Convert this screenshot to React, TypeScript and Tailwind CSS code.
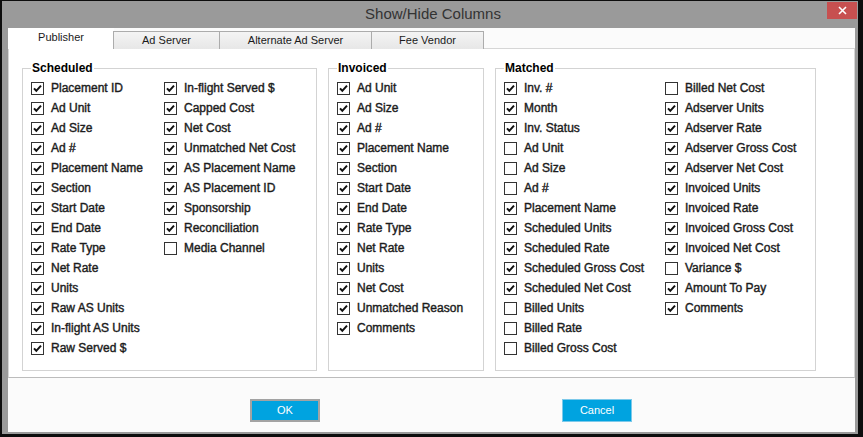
import React from "react";

type Item = { label: string; on: boolean };

const scheduledA: Item[] = [
  { label: "Placement ID", on: true },
  { label: "Ad Unit", on: true },
  { label: "Ad Size", on: true },
  { label: "Ad #", on: true },
  { label: "Placement Name", on: true },
  { label: "Section", on: true },
  { label: "Start Date", on: true },
  { label: "End Date", on: true },
  { label: "Rate Type", on: true },
  { label: "Net Rate", on: true },
  { label: "Units", on: true },
  { label: "Raw AS Units", on: true },
  { label: "In-flight AS Units", on: true },
  { label: "Raw Served $", on: true },
];

const scheduledB: Item[] = [
  { label: "In-flight Served $", on: true },
  { label: "Capped Cost", on: true },
  { label: "Net Cost", on: true },
  { label: "Unmatched Net Cost", on: true },
  { label: "AS Placement Name", on: true },
  { label: "AS Placement ID", on: true },
  { label: "Sponsorship", on: true },
  { label: "Reconciliation", on: true },
  { label: "Media Channel", on: false },
];

const invoiced: Item[] = [
  "Ad Unit",
  "Ad Size",
  "Ad #",
  "Placement Name",
  "Section",
  "Start Date",
  "End Date",
  "Rate Type",
  "Net Rate",
  "Units",
  "Net Cost",
  "Unmatched Reason",
  "Comments",
].map((label) => ({ label, on: true }));

const matchedA: Item[] = [
  { label: "Inv. #", on: true },
  { label: "Month", on: true },
  { label: "Inv. Status", on: true },
  { label: "Ad Unit", on: false },
  { label: "Ad Size", on: false },
  { label: "Ad #", on: false },
  { label: "Placement Name", on: true },
  { label: "Scheduled Units", on: true },
  { label: "Scheduled Rate", on: true },
  { label: "Scheduled Gross Cost", on: true },
  { label: "Scheduled Net Cost", on: true },
  { label: "Billed Units", on: false },
  { label: "Billed Rate", on: false },
  { label: "Billed Gross Cost", on: false },
];

const matchedB: Item[] = [
  { label: "Billed Net Cost", on: false },
  { label: "Adserver Units", on: true },
  { label: "Adserver Rate", on: true },
  { label: "Adserver Gross Cost", on: true },
  { label: "Adserver Net Cost", on: true },
  { label: "Invoiced Units", on: true },
  { label: "Invoiced Rate", on: true },
  { label: "Invoiced Gross Cost", on: true },
  { label: "Invoiced Net Cost", on: true },
  { label: "Variance $", on: false },
  { label: "Amount To Pay", on: true },
  { label: "Comments", on: true },
];

function Check({ item }: { item: Item }) {
  return (
    <div className="flex h-[20px] items-center whitespace-nowrap">
      {/* box */}
      <span className="mr-[7px] flex h-[13px] w-[13px] shrink-0 items-center justify-center border border-[#333] bg-white">
        {item.on && (
          <svg width="11" height="11" viewBox="0 0 11 11">
            <path d="M2 5.4 L4.3 7.8 L9 2.6" fill="none" stroke="#111" strokeWidth="2" />
          </svg>
        )}
      </span>
      <span className="text-[12px] leading-none text-[#1c1c1c] [-webkit-text-stroke:0.4px_#1c1c1c]">
        {item.label}
      </span>
    </div>
  );
}

function Column({ items, width }: { items: Item[]; width?: string }) {
  return (
    <div className={width ?? ""}>
      {items.map((it) => (
        <Check key={it.label} item={it} />
      ))}
    </div>
  );
}

function Group({
  title,
  className,
  children,
}: {
  title: string;
  className: string;
  children: React.ReactNode;
}) {
  return (
    <fieldset className={`h-[310px] border border-[#d3d3d3] pl-[8px] ${className}`}>
      <legend className="px-[1px] text-[12px] font-bold leading-[14px] text-black">
        {title}
      </legend>
      <div className="mt-[3px] flex">{children}</div>
    </fieldset>
  );
}

export default function App() {
  const tabs = [
    { label: "Ad Server", w: "w-[107px]" },
    { label: "Alternate Ad Server", w: "w-[153px]" },
    { label: "Fee Vendor", w: "w-[113px]" },
  ];

  return (
    <div
      className="h-[437px] w-[863px] bg-[#0d0d0d] pb-[3px] pl-[2px] pr-[5px] pt-px"
      style={{ fontFamily: '"Liberation Sans", Arial, sans-serif' }}
    >
      <div className="flex h-full flex-col bg-[#9a9a9a] pb-[2px] pl-[6px] pr-[3px]">
        {/* Title bar */}
        <div className="-ml-[6px] -mr-[3px] grid h-[27px] grid-cols-[1fr_auto_1fr] items-start">
          <div />
          <div className="pl-[6px] pt-[4px] text-[15px] leading-[18px] text-[#333]">Show/Hide Columns</div>
          <div className="flex justify-end pr-px pt-px">
            <div className="flex h-[17px] w-[30px] items-center justify-center bg-[#c75050]">
              <svg width="9" height="9" viewBox="0 0 9 9">
                <path d="M1 1 L8 8 M8 1 L1 8" stroke="#fff" strokeWidth="1.6" />
              </svg>
            </div>
          </div>
        </div>

        {/* Window body */}
        <div className="flex flex-1 flex-col bg-[#fbfbfb]">
          {/* Tabs */}
          <div className="relative z-10 flex h-[21px] items-end">
            <div className="flex h-[21px] w-[106px] items-center justify-center bg-white pb-[2px] text-[11px] text-[#1a1a1a]">
              Publisher
            </div>
            {tabs.map((t) => (
              <div
                key={t.label}
                className={`-ml-px flex h-[18px] items-center justify-center border border-b-0 border-[#acacac] bg-gradient-to-b from-[#f4f4f4] to-[#e7e7e7] text-[11px] text-[#1a1a1a] ${t.w}`}
              >
                {t.label}
              </div>
            ))}
          </div>

          {/* Tab page */}
          <div className="-mt-px flex h-[330px] gap-[11px] border border-[#d6d6d6] border-b-[#bcbcbc] bg-white pb-[6px] pl-[13px] pt-[12px]">
            <Group title="Scheduled" className="w-[295px]">
              <Column items={scheduledA} width="w-[133px]" />
              <Column items={scheduledB} />
            </Group>
            <Group title="Invoiced" className="w-[156px]">
              <Column items={invoiced} />
            </Group>
            <Group title="Matched" className="w-[321px]">
              <Column items={matchedA} width="w-[161px]" />
              <Column items={matchedB} />
            </Group>
          </div>

          {/* Buttons */}
          <div className="flex flex-1 items-start pt-[21px]">
            <button className="ml-[242px] flex h-[23px] w-[70px] items-center justify-center border-2 border-[#a3a3a3] bg-[#00a3e0] text-[11px] text-white">
              OK
            </button>
            <button className="ml-[242px] flex h-[23px] w-[70px] items-center justify-center border border-[#7cc9ea] bg-[#00a3e0] text-[11px] text-white">
              Cancel
            </button>
          </div>
        </div>
      </div>
    </div>
  );
}
